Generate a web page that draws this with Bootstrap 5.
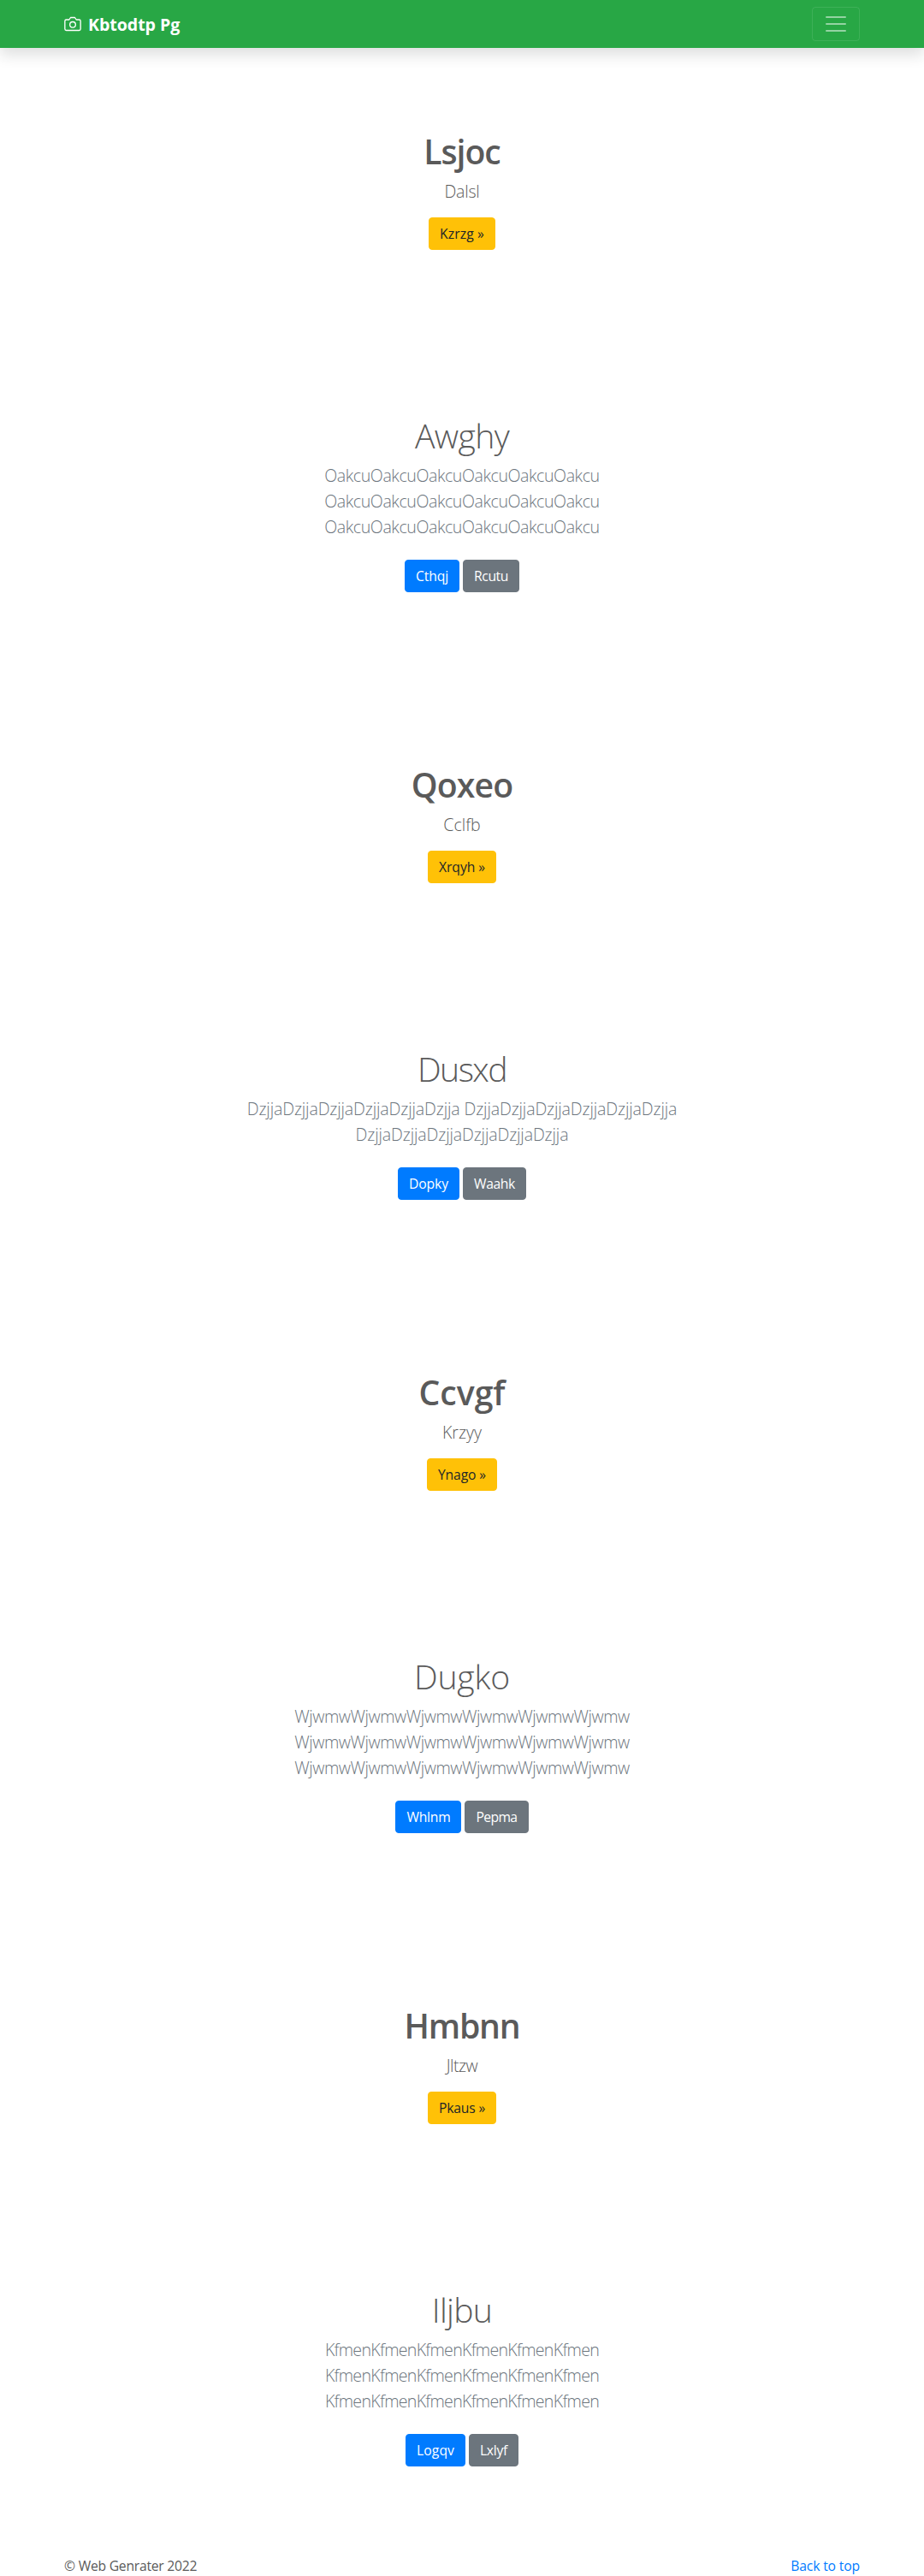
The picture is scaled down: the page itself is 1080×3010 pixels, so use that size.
<!DOCTYPE html>
<html lang="en">
<head>
<meta charset="utf-8">
<meta name="viewport" content="width=device-width, initial-scale=1">
<title>Kbtodtp Pg</title>
<link href="https://cdn.jsdelivr.net/npm/bootstrap@5.3.0/dist/css/bootstrap.min.css" rel="stylesheet">
<style>
  :root { --bs-primary-rgb: 0, 123, 255; }
  body { font-family: "Open Sans", "Noto Sans", sans-serif; font-size: 15.7px; line-height: 24px; color: #5a5a5a; background: #fff; }
  .container { --bs-gutter-x: 30px; }
  .topbar { background: #28a745; }
  .topbar .navbar-brand { font-size: 19.6px; line-height: 30px; font-weight: 700; letter-spacing: -.06px; padding: 4px 0; }
  .brand-name { padding-top: 2px; }
  .topbar .navbar-toggler { padding: 4px 12px; font-size: 20px; line-height: 1; border-radius: 4px; border-color: rgba(255,255,255,.1); }
  .topbar .navbar-toggler-icon { opacity: .92; }
  .band { padding: 96px 15px; text-align: center; }
  .band h1 { font-size: 39.2px; line-height: 50px; margin: 0 0 7px; letter-spacing: var(--title-gap, 0); }
  .hero h1 { font-weight: 600; }
  .intro h1 { font-weight: 300; }
  .intro-body { max-width: 637px; margin: 0 auto; }
  .tagline { font-size: 19.6px; font-weight: 300; line-height: 30px; margin-bottom: 15px; letter-spacing: var(--text-gap, 0); }
  .intro .tagline { color: #6c757d; }
  .btn { --bs-btn-font-size: 15.7px; --bs-btn-line-height: 24px; --bs-btn-border-radius: 4px; height: 38px; }
  .btn-primary { --bs-btn-bg: #007bff; --bs-btn-border-color: #007bff; }
  .btn-warning { --bs-btn-color: #212529; }
  .foot-link { color: #007bff; letter-spacing: -.15px; }
  .foot-note { letter-spacing: -.24px; }
  #lsjoc { --title-gap: -1.05px; --text-gap: -.2px; }
  #qoxeo { --title-gap: -.9px; }
  #ccvgf { --title-gap: 0px; }
  #hmbnn { --title-gap: -1.25px; --text-gap: -.5px; }
  #awghy { --title-gap: -.65px; --text-gap: -.43px; }
  #dusxd { --title-gap: -1.6px; --text-gap: -.13px; }
  #dugko { --title-gap: -.2px; --text-gap: -.46px; }
  #iljbu { --title-gap: -.73px; --text-gap: -.71px; }
  #lsjoc .btn { letter-spacing: .13px; }
  #qoxeo .btn { letter-spacing: -.06px; }
  #ccvgf .btn { letter-spacing: -.13px; }
  #hmbnn .btn { letter-spacing: -.19px; }
  #awghy .btn-primary { letter-spacing: -.13px; }
  #awghy .btn-secondary { letter-spacing: -.42px; }
  #dusxd .btn-primary { letter-spacing: -.1px; }
  #dusxd .btn-secondary { letter-spacing: -.36px; }
  #dugko .btn-primary { letter-spacing: -.26px; }
  #dugko .btn-secondary { letter-spacing: -.6px; }
  #iljbu .btn-primary { letter-spacing: .08px; }
  #iljbu .btn-secondary { letter-spacing: -.3px; }
</style>
<script src="https://cdn.jsdelivr.net/npm/bootstrap@5.3.0/dist/js/bootstrap.bundle.min.js"></script>
</head>
<body>
<header>
  <nav class="navbar navbar-dark topbar shadow py-2">
    <div class="container d-flex justify-content-between">
      <a href="#" class="navbar-brand d-flex align-items-center m-0">
        <svg class="me-2" xmlns="http://www.w3.org/2000/svg" width="20" height="20" fill="none" stroke="currentColor" stroke-linecap="round" stroke-linejoin="round" stroke-width="1.6" viewBox="0 0 24 24" aria-hidden="true"><path d="M23 19a2 2 0 0 1-2 2H3a2 2 0 0 1-2-2V8a2 2 0 0 1 2-2h4l2-3h6l2 3h4a2 2 0 0 1 2 2z"/><circle cx="12" cy="13" r="4"/></svg>
        <span class="brand-name">Kbtodtp Pg</span>
      </a>
      <button class="navbar-toggler" type="button" aria-label="Toggle navigation"><span class="navbar-toggler-icon"></span></button>
    </div>
  </nav>
</header>
<main>
  <section class="band hero" id="lsjoc">
    <h1>Lsjoc</h1>
    <p class="tagline">Dalsl</p>
    <div class="d-flex justify-content-center"><a class="btn btn-warning" href="#">Kzrzg »</a></div>
  </section>
  <section class="band intro" id="awghy">
    <div class="intro-body">
      <h1>Awghy</h1>
      <p class="tagline">OakcuOakcuOakcuOakcuOakcuOakcu OakcuOakcuOakcuOakcuOakcuOakcu OakcuOakcuOakcuOakcuOakcuOakcu</p>
      <div class="d-flex justify-content-center gap-1 py-2"><a class="btn btn-primary" href="#">Cthqj</a><a class="btn btn-secondary" href="#">Rcutu</a></div>
    </div>
  </section>
  <section class="band hero" id="qoxeo">
    <h1>Qoxeo</h1>
    <p class="tagline">Cclfb</p>
    <div class="d-flex justify-content-center"><a class="btn btn-warning" href="#">Xrqyh »</a></div>
  </section>
  <section class="band intro" id="dusxd">
    <div class="intro-body">
      <h1>Dusxd</h1>
      <p class="tagline">DzjjaDzjjaDzjjaDzjjaDzjjaDzjja DzjjaDzjjaDzjjaDzjjaDzjjaDzjja DzjjaDzjjaDzjjaDzjjaDzjjaDzjja</p>
      <div class="d-flex justify-content-center gap-1 py-2"><a class="btn btn-primary" href="#">Dopky</a><a class="btn btn-secondary" href="#">Waahk</a></div>
    </div>
  </section>
  <section class="band hero" id="ccvgf">
    <h1>Ccvgf</h1>
    <p class="tagline">Krzyy</p>
    <div class="d-flex justify-content-center"><a class="btn btn-warning" href="#">Ynago »</a></div>
  </section>
  <section class="band intro" id="dugko">
    <div class="intro-body">
      <h1>Dugko</h1>
      <p class="tagline">WjwmwWjwmwWjwmwWjwmwWjwmwWjwmw WjwmwWjwmwWjwmwWjwmwWjwmwWjwmw WjwmwWjwmwWjwmwWjwmwWjwmwWjwmw</p>
      <div class="d-flex justify-content-center gap-1 py-2"><a class="btn btn-primary" href="#">Whlnm</a><a class="btn btn-secondary" href="#">Pepma</a></div>
    </div>
  </section>
  <section class="band hero" id="hmbnn">
    <h1>Hmbnn</h1>
    <p class="tagline">Jltzw</p>
    <div class="d-flex justify-content-center"><a class="btn btn-warning" href="#">Pkaus »</a></div>
  </section>
  <section class="band intro" id="iljbu">
    <div class="intro-body">
      <h1>Iljbu</h1>
      <p class="tagline">KfmenKfmenKfmenKfmenKfmenKfmen KfmenKfmenKfmenKfmenKfmenKfmen KfmenKfmenKfmenKfmenKfmenKfmen</p>
      <div class="d-flex justify-content-center gap-1 py-2"><a class="btn btn-primary" href="#">Logqv</a><a class="btn btn-secondary" href="#">Lxlyf</a></div>
    </div>
  </section>
</main>
<footer class="container d-flex justify-content-between">
  <span class="foot-note">© Web Genrater 2022</span>
  <a class="foot-link text-decoration-none" href="#">Back to top</a>
</footer>
</body>
</html>
